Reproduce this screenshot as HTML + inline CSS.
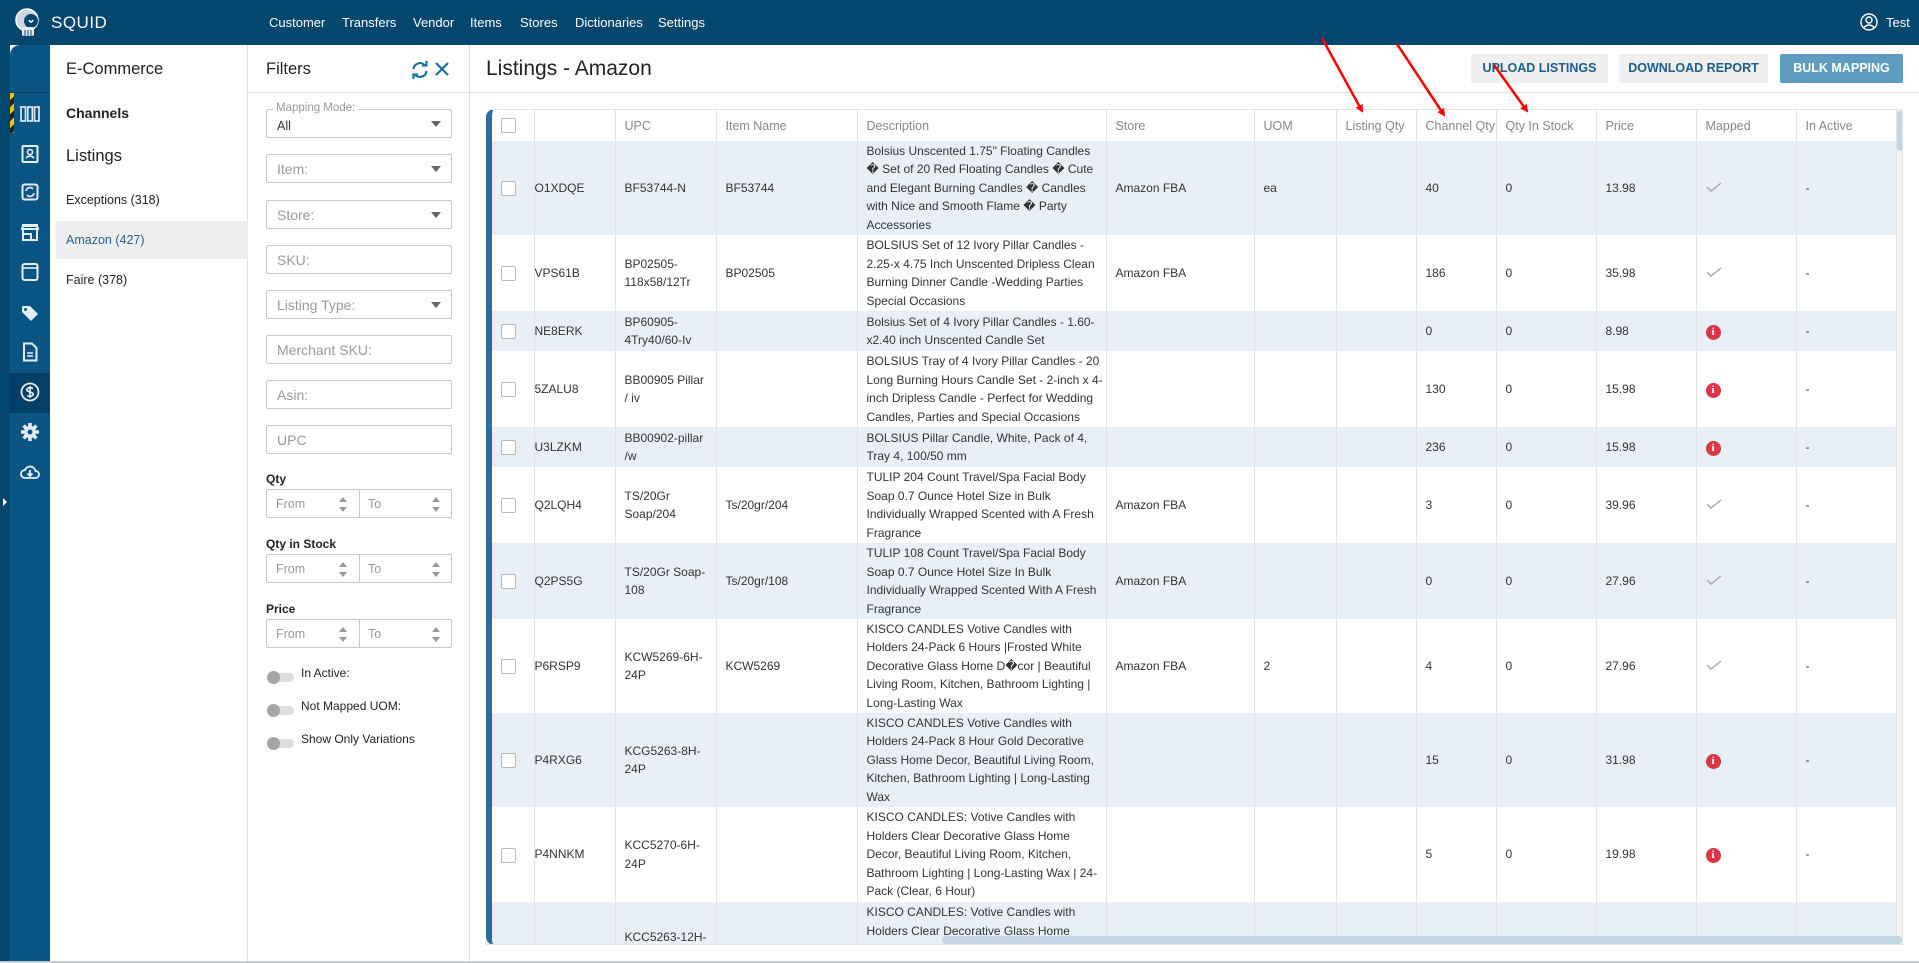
<!DOCTYPE html>
<html><head><meta charset="utf-8">
<style>
*{box-sizing:border-box;margin:0;padding:0}
body{width:1919px;height:963px;overflow:hidden;font-family:"Liberation Sans",Arial,sans-serif;background:#fff;position:relative;color:#333}
.abs{position:absolute}
#top{left:0;top:0;width:1919px;height:45px;background:#03466e}
#top .nav{position:absolute;top:15px;color:#fff;font-size:13px}
#strip{left:0;top:45px;width:10px;height:918px;background:#03466e}
#rail{left:10px;top:45px;width:40px;height:918px;background:#0b5585;border-top-left-radius:10px}
.ri{position:absolute;left:10px;width:20px;height:20px}
#ecom{left:50px;top:45px;width:198px;height:918px;background:#fff;border-right:1px solid #ddd}
#filt{left:248px;top:45px;width:222px;height:918px;background:#fff;border-right:1px solid #ddd}
.inp{position:absolute;left:18px;width:186px;height:29px;border:1px solid #c8c8c8;border-radius:2px;color:#9a9a9a;font-size:14px;padding:6px 0 0 10px}
.caret{position:absolute;right:10px;top:11px;width:0;height:0;border-left:5px solid transparent;border-right:5px solid transparent;border-top:6px solid #666}
.lbl{position:absolute;left:18px;font-size:12px;color:#222;font-weight:bold}
.rng{position:absolute;left:18px;width:186px;height:29px;border:1px solid #c8c8c8;border-radius:2px}
.rng span{position:absolute;top:7px;font-size:12.5px;color:#999}
.sp{position:absolute;top:7px;width:8px;height:15px}
.sp:before{content:"";position:absolute;left:0;top:0;border-left:4px solid transparent;border-right:4px solid transparent;border-bottom:5px solid #999}
.sp:after{content:"";position:absolute;left:0;bottom:0;border-left:4px solid transparent;border-right:4px solid transparent;border-top:5px solid #999}
.tg{position:absolute;left:21px;width:25px;height:9px;border-radius:5px;background:#ddd}
.tg:before{content:"";position:absolute;left:-2px;top:-2px;width:13px;height:13px;border-radius:50%;background:#a5a5a5}
.tl{position:absolute;left:53px;font-size:12px;color:#222}
.btn{position:absolute;top:54px;height:29px;font-size:12.5px;font-weight:bold;text-align:center;line-height:29px;border-radius:2px}
#card{left:486px;top:109px;width:1417px;height:836px;border-left:6px solid #2b6e9a;border-top:1px solid #e3e3e3;border-right:1px solid #e3e3e3;border-radius:8px 0 0 8px;overflow:hidden}
table{border-collapse:collapse;table-layout:fixed;width:1404px;font-size:12px}
td,th{border-right:1px solid #e0e4e8;padding:0 9px;vertical-align:middle;white-space:nowrap;overflow:hidden;text-align:left}
th{font-weight:normal;color:#888;height:31px;font-size:12.5px}
td{line-height:18.5px;color:#333}
tr.b td{background:#e8eff6}
.cb{display:inline-block;width:15px;height:15px;border:1px solid #b9b9b9;border-radius:2px;background:#fff;vertical-align:middle}
.ok{display:inline-block;width:16px;height:10px}
.err{display:inline-block;width:15px;height:15px;border-radius:50%;background:#dc3545;color:#fff;font-weight:bold;font-size:11px;text-align:center;line-height:15px;font-family:"Liberation Serif",serif}
</style></head><body>

<div id="top" class="abs">
  <svg class="abs" style="left:14px;top:8px" width="28" height="30" viewBox="0 0 28 30"><circle cx="13" cy="12" r="11" fill="#cfd8e0" stroke="#fff" stroke-width="1.5"/><circle cx="17" cy="13" r="7" fill="#03466e"/><path d="M15 12 q2 4 4 0" stroke="#fff" stroke-width="1.5" fill="none"/><rect x="8" y="19" width="12" height="9" rx="2" fill="#e8edf2"/><path d="M11 22v6M14 22v6M17 22v6" stroke="#03466e" stroke-width="1"/></svg>
  <div class="abs" style="left:51px;top:13px;color:#fff;font-size:17px;letter-spacing:.5px">SQUID</div>
  <div class="nav" style="left:269px">Customer</div>
  <div class="nav" style="left:342px">Transfers</div>
  <div class="nav" style="left:413px">Vendor</div>
  <div class="nav" style="left:470px">Items</div>
  <div class="nav" style="left:520px">Stores</div>
  <div class="nav" style="left:575px">Dictionaries</div>
  <div class="nav" style="left:658px">Settings</div>
  <svg class="abs" style="left:1860px;top:13px" width="18" height="18" viewBox="0 0 18 18"><circle cx="9" cy="9" r="8" fill="none" stroke="#fff" stroke-width="1.4"/><circle cx="9" cy="7" r="3" fill="none" stroke="#fff" stroke-width="1.4"/><path d="M4 14.5q5-5 10 0" fill="none" stroke="#fff" stroke-width="1.4"/></svg>
  <div class="nav" style="left:1886px">Test</div>
</div>

<div id="strip" class="abs"><div class="abs" style="left:3px;top:453px;border-top:4px solid transparent;border-bottom:4px solid transparent;border-left:4px solid #fff"></div></div>
<div id="rail" class="abs">
  <div class="abs" style="left:0;top:47px;width:40px;height:0;border-top:1px solid #053d60"></div>
  <div class="abs" style="left:0;top:48px;width:4px;height:40px;background:repeating-linear-gradient(135deg,#f5c400 0 5px,#222 5px 10px)"></div>
  <div class="abs" style="left:0;top:328px;width:40px;height:40px;background:#033f66"></div>
  <svg class="ri" style="top:59px" viewBox="0 0 20 20"><rect x="1" y="3" width="4.5" height="14" fill="none" stroke="#e6eef5" stroke-width="1.6"/><rect x="7.8" y="3" width="4.5" height="14" fill="none" stroke="#e6eef5" stroke-width="1.6"/><rect x="14.5" y="3" width="4.5" height="14" fill="none" stroke="#e6eef5" stroke-width="1.6"/></svg>
  <svg class="ri" style="top:99px" viewBox="0 0 20 20"><rect x="2.5" y="2" width="15" height="16" rx="1" fill="none" stroke="#e6eef5" stroke-width="2"/><circle cx="10" cy="8" r="2.5" fill="none" stroke="#e6eef5" stroke-width="1.6"/><path d="M6 14q4-4 8 0" fill="none" stroke="#e6eef5" stroke-width="1.6"/></svg>
  <svg class="ri" style="top:137px" viewBox="0 0 20 20"><rect x="2.5" y="2.5" width="15" height="15" rx="2" fill="none" stroke="#e6eef5" stroke-width="2"/><path d="M6 9a4 4 0 0 1 7-2M14 11a4 4 0 0 1-7 2" fill="none" stroke="#e6eef5" stroke-width="1.6"/></svg>
  <svg class="ri" style="top:177px" viewBox="0 0 20 20"><path d="M2 3h16M2 7h16l-1-3H3z" fill="none" stroke="#e6eef5" stroke-width="2"/><path d="M3 8v10h14V8M3 12h8v6" fill="none" stroke="#e6eef5" stroke-width="2"/></svg>
  <svg class="ri" style="top:217px" viewBox="0 0 20 20"><rect x="2.5" y="2" width="15" height="16" rx="2" fill="none" stroke="#e6eef5" stroke-width="2"/><path d="M2.5 6h15" stroke="#e6eef5" stroke-width="1.6"/></svg>
  <svg class="ri" style="top:258px" viewBox="0 0 20 20"><path d="M2 3h8l8 8-7 7-9-9z" fill="#e6eef5"/><circle cx="5.5" cy="6.5" r="1.5" fill="#0b5585"/></svg>
  <svg class="ri" style="top:297px" viewBox="0 0 20 20"><path d="M4 1.5h8l4.5 4.5v12.5H4z" fill="none" stroke="#e6eef5" stroke-width="2"/><path d="M7 11h6M7 14h6" stroke="#e6eef5" stroke-width="1.6"/></svg>
  <svg class="ri" style="top:337px" viewBox="0 0 20 20"><circle cx="10" cy="10" r="8.5" fill="none" stroke="#e6eef5" stroke-width="1.8"/><path d="M13 6.5q-3-2-5.5 0t2.5 3.5 2.5 3.5-5.5 0M10 4v12" fill="none" stroke="#e6eef5" stroke-width="1.6"/></svg>
  <svg class="ri" style="top:377px" viewBox="0 0 20 20"><circle cx="10" cy="10" r="6" fill="#e6eef5"/><path d="M10 1v18M1 10h18M3.6 3.6l12.8 12.8M16.4 3.6L3.6 16.4" stroke="#e6eef5" stroke-width="3.5"/><circle cx="10" cy="10" r="2.5" fill="#0b5585"/></svg>
  <svg class="ri" style="top:417px" viewBox="0 0 20 20"><path d="M5 16a4 4 0 0 1 0-8 5.5 5.5 0 0 1 10.5 1 3.5 3.5 0 0 1 0 7z" fill="none" stroke="#e6eef5" stroke-width="1.8"/><path d="M10 8v6M7.5 11.5l2.5 2.5 2.5-2.5" fill="none" stroke="#e6eef5" stroke-width="1.8"/></svg>
</div>

<div id="ecom" class="abs">
  <div class="abs" style="left:16px;top:15px;font-size:16.5px;color:#222">E-Commerce</div>
  <div class="abs" style="left:16px;top:60px;font-size:14px;color:#222;font-weight:bold">Channels</div>
  <div class="abs" style="left:16px;top:102px;font-size:16.5px;color:#222">Listings</div>
  <div class="abs" style="left:16px;top:148px;font-size:12.5px;color:#222">Exceptions (318)</div>
  <div class="abs" style="left:6px;top:176px;width:192px;height:38px;background:#efefef;border-radius:3px"></div>
  <div class="abs" style="left:16px;top:188px;font-size:12.5px;color:#2a5d8a">Amazon (427)</div>
  <div class="abs" style="left:16px;top:228px;font-size:12.5px;color:#222">Faire (378)</div>
</div>

<div id="filt" class="abs">
  <div class="abs" style="left:18px;top:15px;font-size:16.5px;color:#222">Filters</div>
  <svg class="abs" style="left:162px;top:15px" width="20" height="20" viewBox="0 0 20 20"><path d="M3.5 9a6.5 6.5 0 0 1 11.5-3.5M16.5 11a6.5 6.5 0 0 1-11.5 3.5" fill="none" stroke="#1a6fa8" stroke-width="2.2"/><path d="M12 5.5h4.5V1M8 14.5H3.5V19" fill="none" stroke="#1a6fa8" stroke-width="2.2"/></svg>
  <svg class="abs" style="left:186px;top:16px" width="16" height="16" viewBox="0 0 16 16"><path d="M2 2l12 12M14 2L2 14" stroke="#1a6fa8" stroke-width="2.2"/></svg>
  <div class="abs" style="left:0;top:47px;width:222px;border-top:1px solid #ddd"></div>
  <div class="inp" style="top:64px;color:#333;padding-top:9px;font-size:12.5px">All<div class="caret"></div></div>
  <div class="abs" style="left:25px;top:57px;background:#fff;padding:0 3px;font-size:11.5px;color:#999">Mapping Mode:</div>
  <div class="inp" style="top:109px">Item:<div class="caret"></div></div>
  <div class="inp" style="top:155px">Store:<div class="caret"></div></div>
  <div class="inp" style="top:200px">SKU:</div>
  <div class="inp" style="top:245px">Listing Type:<div class="caret"></div></div>
  <div class="inp" style="top:290px">Merchant SKU:</div>
  <div class="inp" style="top:335px">Asin:</div>
  <div class="inp" style="top:380px">UPC</div>
  <div class="lbl" style="top:427px">Qty</div>
  <div class="rng" style="top:444px"><span style="left:9px">From</span><div class="sp" style="left:72px"></div><div style="position:absolute;left:92px;top:0;height:27px;border-left:1px solid #c8c8c8"></div><span style="left:101px">To</span><div class="sp" style="left:165px"></div></div>
  <div class="lbl" style="top:492px">Qty in Stock</div>
  <div class="rng" style="top:509px"><span style="left:9px">From</span><div class="sp" style="left:72px"></div><div style="position:absolute;left:92px;top:0;height:27px;border-left:1px solid #c8c8c8"></div><span style="left:101px">To</span><div class="sp" style="left:165px"></div></div>
  <div class="lbl" style="top:557px">Price</div>
  <div class="rng" style="top:574px"><span style="left:9px">From</span><div class="sp" style="left:72px"></div><div style="position:absolute;left:92px;top:0;height:27px;border-left:1px solid #c8c8c8"></div><span style="left:101px">To</span><div class="sp" style="left:165px"></div></div>
  <div class="tg" style="top:628px"></div><div class="tl" style="top:621px">In Active:</div>
  <div class="tg" style="top:661px"></div><div class="tl" style="top:654px">Not Mapped UOM:</div>
  <div class="tg" style="top:694px"></div><div class="tl" style="top:687px">Show Only Variations</div>
</div>

<div class="abs" style="left:486px;top:57px;font-size:21px;color:#222">Listings - Amazon</div>
<div class="abs" style="left:470px;top:92px;width:1449px;border-top:1px solid #ddd"></div>
<div class="btn" style="left:1471px;width:137px;background:#efefef;color:#1d5d8a">UPLOAD LISTINGS</div>
<div class="btn" style="left:1619px;width:149px;background:#efefef;color:#1d5d8a">DOWNLOAD REPORT</div>
<div class="btn" style="left:1780px;width:123px;background:#5f9bbf;color:#fff">BULK MAPPING</div>

<div id="card" class="abs">
<table>
<colgroup><col style="width:42px"><col style="width:81px"><col style="width:101px"><col style="width:141px"><col style="width:249px"><col style="width:148px"><col style="width:82px"><col style="width:80px"><col style="width:80px"><col style="width:100px"><col style="width:100px"><col style="width:100px"><col style="width:100px"></colgroup>
<tr><th><span class="cb"></span></th><th></th><th>UPC</th><th>Item Name</th><th>Description</th><th>Store</th><th>UOM</th><th>Listing Qty</th><th>Channel Qty</th><th>Qty In Stock</th><th>Price</th><th>Mapped</th><th>In Active</th></tr>
<tr class="b" style="height:94px"><td><span class="cb"></span></td><td style="padding-left:0">O1XDQE</td><td>BF53744-N</td><td>BF53744</td><td>Bolsius Unscented 1.75" Floating Candles<br>� Set of 20 Red Floating Candles � Cute<br>and Elegant Burning Candles � Candles<br>with Nice and Smooth Flame � Party<br>Accessories</td><td>Amazon FBA</td><td>ea</td><td></td><td>40</td><td>0</td><td>13.98</td><td><svg class="ok" viewBox="0 0 16 10"><path d="M1 5l4 4 10-8" fill="none" stroke="#aaa" stroke-width="1.4"/></svg></td><td>-</td></tr>
<tr style="height:76px"><td><span class="cb"></span></td><td style="padding-left:0">VPS61B</td><td>BP02505-<br>118x58/12Tr</td><td>BP02505</td><td>BOLSIUS Set of 12 Ivory Pillar Candles -<br>2.25-x 4.75 Inch Unscented Dripless Clean<br>Burning Dinner Candle -Wedding Parties<br>Special Occasions</td><td>Amazon FBA</td><td></td><td></td><td>186</td><td>0</td><td>35.98</td><td><svg class="ok" viewBox="0 0 16 10"><path d="M1 5l4 4 10-8" fill="none" stroke="#aaa" stroke-width="1.4"/></svg></td><td>-</td></tr>
<tr class="b" style="height:40px"><td><span class="cb"></span></td><td style="padding-left:0">NE8ERK</td><td>BP60905-<br>4Try40/60-Iv</td><td></td><td>Bolsius Set of 4 Ivory Pillar Candles - 1.60-<br>x2.40 inch Unscented Candle Set</td><td></td><td></td><td></td><td>0</td><td>0</td><td>8.98</td><td><span class="err">i</span></td><td>-</td></tr>
<tr style="height:76px"><td><span class="cb"></span></td><td style="padding-left:0">5ZALU8</td><td>BB00905 Pillar<br>/ iv</td><td></td><td>BOLSIUS Tray of 4 Ivory Pillar Candles - 20<br>Long Burning Hours Candle Set - 2-inch x 4-<br>inch Dripless Candle - Perfect for Wedding<br>Candles, Parties and Special Occasions</td><td></td><td></td><td></td><td>130</td><td>0</td><td>15.98</td><td><span class="err">i</span></td><td>-</td></tr>
<tr class="b" style="height:40px"><td><span class="cb"></span></td><td style="padding-left:0">U3LZKM</td><td>BB00902-pillar<br>/w</td><td></td><td>BOLSIUS Pillar Candle, White, Pack of 4,<br>Tray 4, 100/50 mm</td><td></td><td></td><td></td><td>236</td><td>0</td><td>15.98</td><td><span class="err">i</span></td><td>-</td></tr>
<tr style="height:76px"><td><span class="cb"></span></td><td style="padding-left:0">Q2LQH4</td><td>TS/20Gr<br>Soap/204</td><td>Ts/20gr/204</td><td>TULIP 204 Count Travel/Spa Facial Body<br>Soap 0.7 Ounce Hotel Size in Bulk<br>Individually Wrapped Scented with A Fresh<br>Fragrance</td><td>Amazon FBA</td><td></td><td></td><td>3</td><td>0</td><td>39.96</td><td><svg class="ok" viewBox="0 0 16 10"><path d="M1 5l4 4 10-8" fill="none" stroke="#aaa" stroke-width="1.4"/></svg></td><td>-</td></tr>
<tr class="b" style="height:76px"><td><span class="cb"></span></td><td style="padding-left:0">Q2PS5G</td><td>TS/20Gr Soap-<br>108</td><td>Ts/20gr/108</td><td>TULIP 108 Count Travel/Spa Facial Body<br>Soap 0.7 Ounce Hotel Size In Bulk<br>Individually Wrapped Scented With A Fresh<br>Fragrance</td><td>Amazon FBA</td><td></td><td></td><td>0</td><td>0</td><td>27.96</td><td><svg class="ok" viewBox="0 0 16 10"><path d="M1 5l4 4 10-8" fill="none" stroke="#aaa" stroke-width="1.4"/></svg></td><td>-</td></tr>
<tr style="height:94px"><td><span class="cb"></span></td><td style="padding-left:0">P6RSP9</td><td>KCW5269-6H-<br>24P</td><td>KCW5269</td><td>KISCO CANDLES Votive Candles with<br>Holders 24-Pack 6 Hours |Frosted White<br>Decorative Glass Home D�cor | Beautiful<br>Living Room, Kitchen, Bathroom Lighting |<br>Long-Lasting Wax</td><td>Amazon FBA</td><td>2</td><td></td><td>4</td><td>0</td><td>27.96</td><td><svg class="ok" viewBox="0 0 16 10"><path d="M1 5l4 4 10-8" fill="none" stroke="#aaa" stroke-width="1.4"/></svg></td><td>-</td></tr>
<tr class="b" style="height:94px"><td><span class="cb"></span></td><td style="padding-left:0">P4RXG6</td><td>KCG5263-8H-<br>24P</td><td></td><td>KISCO CANDLES Votive Candles with<br>Holders 24-Pack 8 Hour Gold Decorative<br>Glass Home Decor, Beautiful Living Room,<br>Kitchen, Bathroom Lighting | Long-Lasting<br>Wax</td><td></td><td></td><td></td><td>15</td><td>0</td><td>31.98</td><td><span class="err">i</span></td><td>-</td></tr>
<tr style="height:95px"><td><span class="cb"></span></td><td style="padding-left:0">P4NNKM</td><td>KCC5270-6H-<br>24P</td><td></td><td>KISCO CANDLES: Votive Candles with<br>Holders Clear Decorative Glass Home<br>Decor, Beautiful Living Room, Kitchen,<br>Bathroom Lighting | Long-Lasting Wax | 24-<br>Pack (Clear, 6 Hour)</td><td></td><td></td><td></td><td>5</td><td>0</td><td>19.98</td><td><span class="err">i</span></td><td>-</td></tr>
<tr class="b" style="height:95px"><td></td><td></td><td style="vertical-align:top;padding-top:26px">KCC5263-12H-</td><td></td><td style="vertical-align:top;padding-top:1px">KISCO CANDLES: Votive Candles with<br>Holders Clear Decorative Glass Home<br>Decor, Beautiful Living Room, Kitchen,</td><td></td><td></td><td></td><td></td><td></td><td></td><td></td><td></td></tr>
</table>
<div class="abs" style="left:1405px;top:0;width:6px;height:835px;background:#f4f4f4"></div>
<div class="abs" style="left:1405px;top:1px;width:6px;height:40px;background:#c5d6e2;border-radius:3px"></div>
<div class="abs" style="left:450px;top:826px;width:960px;height:8px;background:#c2d6e4;border-radius:4px"></div>
</div>
<div class="abs" style="left:486px;top:944px;width:1417px;border-top:1px solid #e3e3e3"></div>
<div class="abs" style="left:0;top:961px;width:1919px;border-top:2px solid #c8ccd0"></div>

<svg class="abs" style="left:0;top:0" width="1919" height="963">
<defs><marker id="ah" markerWidth="8" markerHeight="8" refX="6" refY="4" orient="auto" markerUnits="userSpaceOnUse"><path d="M0 0L8 4L0 8z" fill="#f00"/></marker></defs>
<g stroke="#f00" stroke-width="2.5" fill="none">
<line x1="1322" y1="38" x2="1362" y2="111" marker-end="url(#ah)"/>
<line x1="1397" y1="44" x2="1444" y2="115" marker-end="url(#ah)"/>
<line x1="1494" y1="65" x2="1527" y2="111" marker-end="url(#ah)"/>
</g></svg>
</body></html>
